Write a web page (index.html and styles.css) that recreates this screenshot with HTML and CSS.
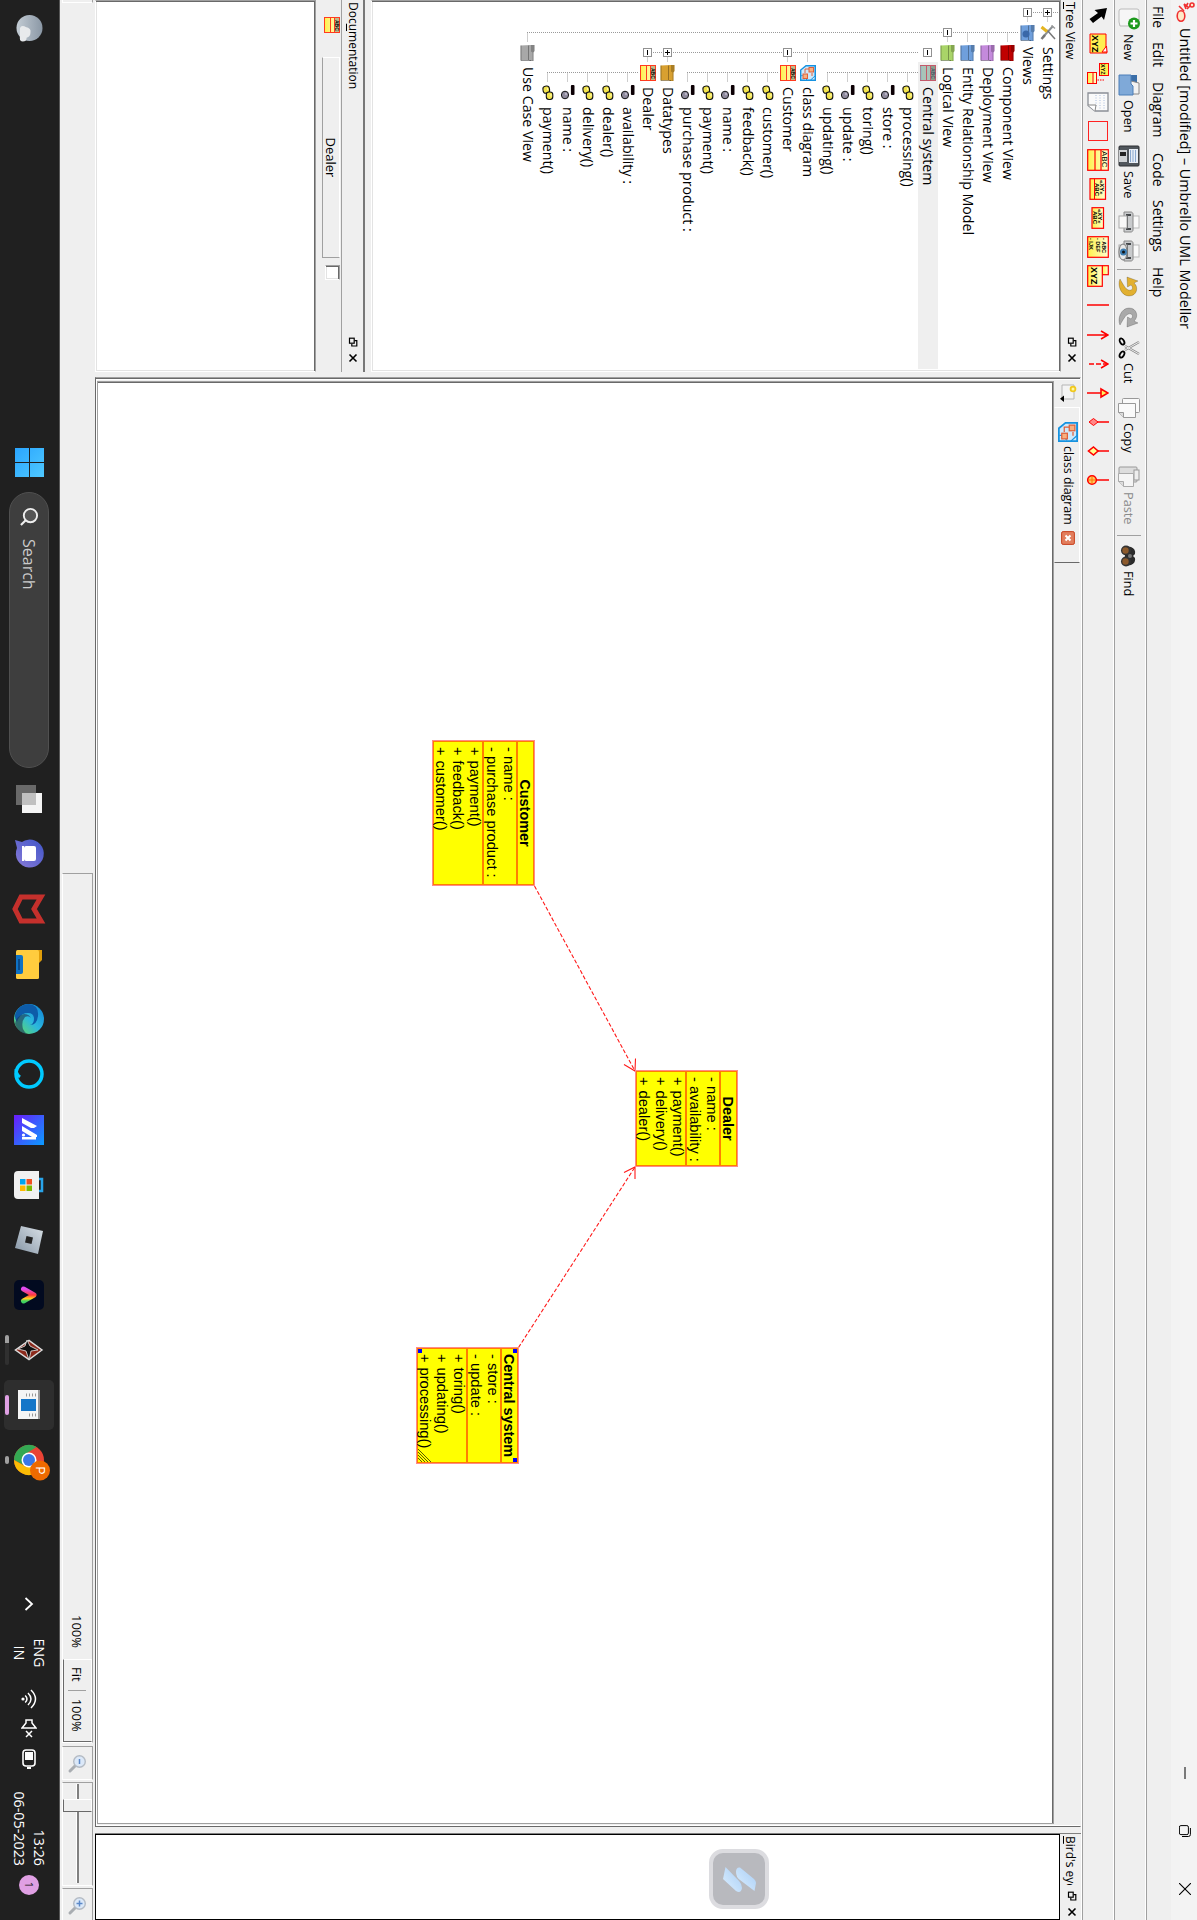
FILE: index.html
```html
<!DOCTYPE html>
<html lang="en">
<head>
<meta charset="utf-8">
<title>Umbrello UML Modeller</title>
<link rel="stylesheet" href="styles.css">
</head>
<body>
<svg class="defs" aria-hidden="true">
  <defs>
    <linearGradient id="gy" x1="0" y1="0" x2="0" y2="1"><stop offset="0" stop-color="#ffffd0"/><stop offset="1" stop-color="#fff04a"/></linearGradient>
    <linearGradient id="gs" x1="1" y1="0" x2="0" y2="1"><stop offset="0" stop-color="#4fc9ff"/><stop offset="1" stop-color="#2aa5ff"/></linearGradient>
    <linearGradient id="gw" x1="0" y1="0" x2="0" y2="1"><stop offset="0" stop-color="#8a97a5"/><stop offset="1" stop-color="#c3ccd4"/></linearGradient>
    <linearGradient id="gb" x1="0" y1="1" x2="1" y2="0"><stop offset="0" stop-color="#6a1cfb"/><stop offset="1" stop-color="#0a9cff"/></linearGradient>
    <linearGradient id="ge" x1="0" y1="0" x2="1" y2="1"><stop offset="0" stop-color="#0f7fd6"/><stop offset=".5" stop-color="#2bb7dd"/><stop offset="1" stop-color="#6be04e"/></linearGradient>
    <linearGradient id="gr" x1="0" y1="0" x2="1" y2="1"><stop offset="0" stop-color="#d9e0e6"/><stop offset="1" stop-color="#8595a5"/></linearGradient>
    <linearGradient id="gv" x1="0" y1="0" x2="1" y2="0"><stop offset="0" stop-color="#e04bf0"/><stop offset=".5" stop-color="#ff3a3a"/><stop offset=".8" stop-color="#ffd21e"/><stop offset="1" stop-color="#40d060"/></linearGradient>
    <linearGradient id="gc" x1="0" y1="0" x2="1" y2="1"><stop offset="0" stop-color="#3f55c8"/><stop offset="1" stop-color="#8a7bd8"/></linearGradient>
    <linearGradient id="gp" x1="0" y1="0" x2="1" y2="1"><stop offset="0" stop-color="#a8cdf5"/><stop offset="1" stop-color="#dcefff"/></linearGradient>
    <symbol id="folder" viewBox="0 0 16 16"><path d="M0 1.500h6l1.500 1H16v4H0z" fill="currentColor"/><path d="M0 1.500h6l1.500 1H16v4H0z" fill="#000" opacity=".22"/><path d="M0 5h6.500l1-1.500H15.500V15.500H.5z" fill="currentColor"/><path d="M.5 7.500H15M.5 15H15.500V5" stroke="#000" stroke-opacity=".3" fill="none"/></symbol>
    <symbol id="tools" viewBox="0 0 16 16"><path d="M1 3l11 10" stroke="#8d9296" stroke-width="2"/><path d="M14 1L5 9" stroke="#777" stroke-width="1.500"/><path d="M6.500 9L2 14.500" stroke="#e5b520" stroke-width="3"/><path d="M10 11l4 3.500" stroke="#777" stroke-width="2.500"/><path d="M.5 4.500L3.500 1" stroke="#999" stroke-width="1.500"/></symbol>
    <symbol id="class" viewBox="0 0 16 16"><rect x=".5" y=".5" width="15" height="15" fill="url(#gy)" stroke="#ff3b1f"/><rect x="1" y="1" width="14" height="4.500" fill="#bdb98a"/><path d="M.5 5.500h15M.5 9.500h15" stroke="#ff3b1f"/><text x="3" y="5" font-size="5" font-weight="700">ABC</text></symbol>
    <symbol id="classsel" viewBox="0 0 16 16"><rect x=".5" y=".5" width="15" height="15" fill="#a9c4b8" stroke="#c4596a"/><rect x="1" y="1" width="14" height="4.500" fill="#8c9c8c"/><path d="M1 5.500h14M1 9.500h14" stroke="#c4596a"/><path d="M1 15h14" stroke="#86b8c8"/><text x="3" y="5" font-size="5" font-weight="700" fill="#456">ABC</text></symbol>
    <symbol id="diagram" viewBox="0 0 16 16"><path d="M.7.7h14.600v14.600H5L.7 10z" fill="#cfe9fb" stroke="#1692e0" stroke-width="1.400"/><path d="M.7.7h10l4.600 5" fill="none" stroke="#1692e0"/><path d="M15 9.500c-4-.5-4.500 2-4.200 5.500" fill="#fff" stroke="#1692e0"/><path d="M4 5v6h4M8 4h3" stroke="#e0603a" fill="none"/><rect x="2.500" y="2.500" width="4.500" height="4.500" fill="#f7b080" stroke="#e0603a"/><rect x="9" y="8.500" width="4.500" height="4.500" fill="#f7b080" stroke="#e0603a"/></symbol>
    <symbol id="op" viewBox="0 0 16 16"><rect x="1" y="6.500" width="7" height="6.500" rx="2.700" fill="#f2e34b" stroke="#111" stroke-width="1.100" transform="rotate(-8 4.500 9)"/><rect x="7" y="3.200" width="7.500" height="6.500" rx="2.700" fill="#f2e34b" stroke="#111" stroke-width="1.100"/><path d="M3 8.500h2M9 5h2.500" stroke="#fff9a8" stroke-width="1.200"/></symbol>
    <symbol id="attr" viewBox="0 0 16 16"><rect x="0" y="1.500" width="10" height="3.600" rx="1" fill="#0c0005"/><ellipse cx="10" cy="11" rx="3.800" ry="3.600" fill="#8e8a9c" stroke="#111"/><circle cx="9" cy="10" r="1.200" fill="#bab6c6"/></symbol>
    <symbol id="plus" viewBox="0 0 9 9"><rect x=".5" y=".5" width="8" height="8" fill="#fff" stroke="#919191"/><path d="M2 4.500h5M4.500 2v5" stroke="#000"/></symbol>
    <symbol id="minus" viewBox="0 0 9 9"><rect x=".5" y=".5" width="8" height="8" fill="#fff" stroke="#919191"/><path d="M2 4.500h5" stroke="#000"/></symbol>
    <symbol id="float" viewBox="0 0 10 10"><path d="M3.700 3.500V1.200H9v5H6.800" fill="none" stroke="#000" stroke-width="1.200"/><rect x="1.200" y="3.800" width="5" height="4.700" fill="none" stroke="#000" stroke-width="1.200"/></symbol>
    <symbol id="close" viewBox="0 0 10 10"><path d="M1.500 1.500l7 7M8.500 1.500l-7 7" stroke="#000" stroke-width="1.600"/></symbol>
    <symbol id="printer" viewBox="0 0 22 22"><rect x="5" y="1" width="12" height="8" fill="#fafafa" stroke="#bbb"/><path d="M1 9c0-1 1-2 2-2h16c1 0 2 1 2 2v7H1z" fill="#c9cbcd" stroke="#888"/><path d="M3 9h2v5H3zM17 9h2v5h-2zM5 12h12v2H5z" fill="#45484b"/><rect x="5" y="13" width="12" height="8" fill="#f8f8f8" stroke="#aaa"/></symbol>
    <symbol id="arrowc" viewBox="0 0 22 22"><path d="M3 20C9 23 20 19 20 11 20 3 11 1 7 6L5 2 1 13l10-.5-2-3.500c3-3 6-1 5 2.500-1 3-5 5-11 8.500z" fill="currentColor" stroke="#0003"/></symbol>
    <symbol id="lens" viewBox="0 0 20 20"><path d="M11 11l6 6" stroke="#a9adb2" stroke-width="3" stroke-linecap="round"/><circle cx="7.500" cy="7.500" r="5.800" fill="#dbe8f8" stroke="#b4bbc4" stroke-width="1.400"/></symbol>
  </defs>
</svg>
<div class="screen">
  <header class="titlebar">
    <svg class="logo" viewBox="0 0 20 20"><g fill="#ffe9c8" stroke="#f03030" stroke-width="1.600"><path d="M7 8L3 4M9 11L4 16"/><circle cx="3" cy="3" r="2"/><path d="M1 7l5 3M2 11l5-2M5 7l-3 4"/><ellipse cx="14" cy="14" rx="5.200" ry="3.800"/></g></svg>
    <span class="caption">Untitled [modified] – Umbrello UML Modeller</span>
    <div class="winbtns">
      <svg viewBox="0 0 12 12"><path d="M0 6h12" stroke="#000"/></svg>
      <svg viewBox="0 0 12 12"><rect x=".6" y="2.600" width="9" height="9" rx="1.500" fill="none" stroke="#000"/><path d="M3 .6h6.500q2 0 2 2V9" fill="none" stroke="#000"/></svg>
      <svg viewBox="0 0 12 12"><path d="M0 0l12 12M12 0L0 12" stroke="#000" stroke-width="1.100"/></svg>
    </div>
  </header>
  <nav class="menubar"><span>File</span><span>Edit</span><span>Diagram</span><span>Code</span><span>Settings</span><span>Help</span></nav>
  <div class="toolbar main-tools">
    <span class="tool"><svg viewBox="0 0 22 22"><path d="M1 3q0-2 2-2h13q2 0 2 2v17l-4 1H3q-2 0-2-2z" fill="#f6f6f6" stroke="#bbb"/><circle cx="15.500" cy="6" r="6" fill="#1d9a1d"/><path d="M12 6h7M15.500 2.500v7" stroke="#fff" stroke-width="2.200"/></svg>New</span>
    <span class="tool"><svg viewBox="0 0 22 22"><path d="M1 3h8l2 2h8v12H1z" fill="#3a6ea8"/><path d="M9 1h11v12H6z" fill="#f2f2f2" stroke="#888"/><path d="M1 9h9l2-2h9v14H1z" fill="#7fa9d8" stroke="#4d7fb8"/></svg>Open</span>
    <span class="tool"><svg viewBox="0 0 22 22"><rect x="1" y="1" width="20" height="20" rx="1" fill="#50565c" stroke="#2c2f33"/><rect x="4" y="2" width="14" height="9" fill="#e8eef6"/><path d="M5 4.500h12M5 7h12M5 9.500h12" stroke="#8aa9d0"/><rect x="5" y="13" width="12" height="8" fill="#cfd2d5"/><rect x="7" y="14" width="4" height="6" fill="#222"/></svg>Save</span>
    <svg><use href="#printer"/></svg>
    <svg viewBox="0 0 22 22"><use href="#printer"/><ellipse cx="12" cy="17" rx="8" ry="4" fill="#e9e9e9" stroke="#777"/><circle cx="12" cy="16.500" r="3.500" fill="#3c7cb0"/><circle cx="12" cy="16.500" r="1.500" fill="#111"/></svg>
    <i class="sep"></i>
    <svg class="undo"><use href="#arrowc"/></svg>
    <svg class="redo"><use href="#arrowc"/></svg>
    <span class="tool"><svg viewBox="0 0 22 22"><path d="M5 1l8 14M17 1L9 15" stroke="#888" stroke-width="2.500"/><path d="M5 1l8 14M17 1L9 15" stroke="#eee" stroke-width="1"/><ellipse cx="4.500" cy="18" rx="3.300" ry="2" transform="rotate(-30 4.500 18)" fill="none" stroke="#000" stroke-width="1.800"/><ellipse cx="17.500" cy="18" rx="3.300" ry="2" transform="rotate(30 17.500 18)" fill="none" stroke="#000" stroke-width="1.800"/></svg>Cut</span>
    <span class="tool"><svg viewBox="0 0 22 22"><rect x="1.500" y=".5" width="14" height="17" rx="1" fill="#fafafa" stroke="#999"/><path d="M6.500 4.500h14v12l-5 5h-9z" fill="#fafafa" stroke="#999"/><path d="M20.500 16.500h-5v5" fill="#ddd" stroke="#999"/></svg>Copy</span>
    <span class="tool off"><svg viewBox="0 0 22 22"><rect x="1" y="3" width="15" height="18" rx="1" fill="#ddd" stroke="#999"/><rect x="4" y="1" width="10" height="5" fill="#eee" stroke="#999"/><path d="M7.500 6.500h13v10l-5 5h-8z" fill="#f5f5f5" stroke="#aaa"/><path d="M20.500 16.500h-5v5" fill="#ddd" stroke="#aaa"/></svg>Paste</span>
    <i class="sep"></i>
    <span class="tool"><svg viewBox="0 0 22 22"><path d="M2 9q2-5 7-4l2 2 2-2q5-1 7 4l1 6H1z" fill="#2b2b2b"/><circle cx="5.500" cy="14" r="5" fill="#333"/><circle cx="16.500" cy="14" r="5" fill="#333"/><circle cx="5.500" cy="14.500" r="3.200" fill="#8c5a2c"/><circle cx="16.500" cy="14.500" r="3.200" fill="#8c5a2c"/><circle cx="11" cy="10" r="2" fill="#777"/></svg>Find</span>
  </div>
  <div class="toolbar draw-tools">
    <svg viewBox="0 0 22 22"><path d="M4 2l12 3-3.500 2.500L19 16l-4 3.500-6-8.500-3 3.500z" fill="#000"/></svg>
    <svg viewBox="0 0 22 22"><path d="M1 3h13l6-1v17H1z" fill="#ffee50" stroke="#f00"/><path d="M13 2.500l6 4.500V2z" fill="#fff" stroke="#f00"/><text x="2" y="17" font-size="9" font-weight="700">XYZ</text></svg>
    <svg viewBox="0 0 22 22"><rect x="1.500" y=".5" width="12" height="9" fill="#ffee50" stroke="#f00"/><path d="M18 5v8" stroke="#f00" stroke-dasharray="1.500 1"/><rect x="10.500" y="12.500" width="11" height="9" fill="url(#gy)" stroke="#f00"/><path d="M10.500 16h11" stroke="#f00"/><text x="2" y="8" font-size="5.500" font-weight="700">XYZ</text></svg>
    <svg viewBox="0 0 22 22"><path d="M2 1h18v13l-5.500 7H2z" fill="#fafafa" stroke="#8b8f96" stroke-width="1.300"/><path d="M4 5h14M4 9h14M4 13h12" stroke="#a9bddd" stroke-dasharray="1 1.500"/><path d="M20 14l-6-1v8" fill="#fff" stroke="#888"/></svg>
    <svg viewBox="0 0 22 22"><rect x="1.500" y="1.500" width="19" height="19" fill="none" stroke="#f22"/></svg>
    <svg viewBox="0 0 22 22"><rect x=".7" y=".7" width="20.600" height="20.600" fill="url(#gy)" stroke="#f00" stroke-width="1.200"/><path d="M1 8h20M1 14h20" stroke="#f00" stroke-width="1.200"/><text x="2" y="7.500" font-size="8">ABC</text></svg>
    <svg viewBox="0 0 22 22"><rect x=".7" y="3.500" width="20.600" height="15.500" fill="url(#gy)" stroke="#f00" stroke-width="1.200"/><path d="M1 14.500h20" stroke="#f00"/><text x="2" y="9" font-size="6" font-weight="700">«XY»</text><text x="5" y="14" font-size="6" font-weight="700">ABC</text></svg>
    <svg viewBox="0 0 22 22"><rect x=".7" y="5.500" width="20.600" height="11.500" fill="url(#gy)" stroke="#f00" stroke-width="1.200"/><text x="2" y="11" font-size="6" font-weight="700">«XY»</text><text x="4" y="16.500" font-size="6" font-weight="700">ABC</text></svg>
    <svg viewBox="0 0 22 22"><rect x=".7" y=".7" width="20.600" height="20.600" fill="url(#gy)" stroke="#f00" stroke-width="1.200"/><g font-size="5.500" font-weight="700"><text x="2" y="7">- ABC</text><text x="2" y="13.500">- DEF</text><text x="2" y="20">- IJK</text></g></svg>
    <svg viewBox="0 0 22 22"><rect x=".7" y=".7" width="9" height="6" fill="url(#gy)" stroke="#f00" stroke-width="1.200"/><rect x=".7" y="6.700" width="20.600" height="14.600" fill="url(#gy)" stroke="#f00" stroke-width="1.200"/><text x="2" y="18" font-size="9" font-weight="700">XYZ</text></svg>
    <svg viewBox="0 0 22 22" class="rel"><path d="M11 0v22"/></svg>
    <svg viewBox="0 0 22 22" class="rel"><path d="M11 1v21M7 8l4-7 4 7"/></svg>
    <svg viewBox="0 0 22 22" class="rel"><path d="M11 1v21" stroke-dasharray="5 2"/><path d="M7 8l4-7 4 7"/></svg>
    <svg viewBox="0 0 22 22" class="rel"><path d="M11 8v14"/><path d="M7 8l4-7 4 7z" fill="#ffef60"/></svg>
    <svg viewBox="0 0 22 22" class="rel"><path d="M11 0v12"/><path d="M7.500 15.500l3.500-4.500 3.500 4.500-3.500 4.500z" fill="#f88" stroke-width="1"/></svg>
    <svg viewBox="0 0 22 22" class="rel"><path d="M11 0v11"/><path d="M7 15.500l4-4.500 4 4.500-4 5z" fill="#ffff90"/></svg>
    <svg viewBox="0 0 22 22" class="rel"><path d="M11 0v12"/><circle cx="11" cy="17" r="4.300" fill="#ffc860"/><path d="M7 17h8M11 13v8" stroke="#f70" stroke-width="1"/></svg>
  </div>
  <main class="work">
    <aside class="left">
      <section class="dock tree-dock">
        <div class="docktitle"><span><u>T</u>ree View</span><svg><use href="#float"/></svg><svg><use href="#close"/></svg></div>
        <div class="sunken tree">
          <svg class="guides" viewBox="0 0 368 685" width="368" height="685">
            <path d="M10.500 1V31M10.500 11.500h9M10.500 31.500h9M30.500 41V532M30.500 51.500h10M30.500 71.500h10M30.500 91.500h10M30.500 111.500h10M30.500 531.500h10M50.500 121V412M50.500 131.500h10M50.500 251.500h10M50.500 271.500h10M50.500 391.500h10M50.500 411.500h10M70.500 141V232M70.500 151.500h10M70.500 171.500h10M70.500 191.500h10M70.500 211.500h10M70.500 231.500h10M70.500 281V372M70.500 291.500h10M70.500 311.500h10M70.500 331.500h10M70.500 351.500h10M70.500 371.500h10M70.500 421V512M70.500 431.500h10M70.500 451.500h10M70.500 471.500h10M70.500 491.500h10M70.500 511.500h10" stroke="#9a9a9a" stroke-dasharray="1 1" fill="none"/>
          </svg>
          <div class="row l0"><svg class="box"><use href="#plus"/></svg><svg><use href="#tools"/></svg>Settings</div>
          <div class="row l0"><svg class="box"><use href="#minus"/></svg><svg class="blue"><use href="#folder"/><circle cx="9" cy="10" r="3.500" fill="#3a68a8"/></svg>Views</div>
          <div class="row l1"><i class="box"></i><svg class="red"><use href="#folder"/></svg>Component View</div>
          <div class="row l1"><i class="box"></i><svg class="purple"><use href="#folder"/></svg>Deployment View</div>
          <div class="row l1"><i class="box"></i><svg class="blue"><use href="#folder"/></svg>Entity Relationship Model</div>
          <div class="row l1"><svg class="box"><use href="#minus"/></svg><svg class="green"><use href="#folder"/></svg>Logical View</div>
          <div class="row l2 sel"><svg class="box"><use href="#minus"/></svg><svg><use href="#classsel"/></svg>Central system</div>
          <div class="row l3"><i class="box"></i><svg><use href="#op"/></svg>processing()</div>
          <div class="row l3"><i class="box"></i><svg><use href="#attr"/></svg>store :</div>
          <div class="row l3"><i class="box"></i><svg><use href="#op"/></svg>toring()</div>
          <div class="row l3"><i class="box"></i><svg><use href="#attr"/></svg>update :</div>
          <div class="row l3"><i class="box"></i><svg><use href="#op"/></svg>updating()</div>
          <div class="row l2"><i class="box"></i><svg><use href="#diagram"/></svg>class diagram</div>
          <div class="row l2"><svg class="box"><use href="#minus"/></svg><svg><use href="#class"/></svg>Customer</div>
          <div class="row l3"><i class="box"></i><svg><use href="#op"/></svg>customer()</div>
          <div class="row l3"><i class="box"></i><svg><use href="#op"/></svg>feedback()</div>
          <div class="row l3"><i class="box"></i><svg><use href="#attr"/></svg>name :</div>
          <div class="row l3"><i class="box"></i><svg><use href="#op"/></svg>payment()</div>
          <div class="row l3"><i class="box"></i><svg><use href="#attr"/></svg>purchase product :</div>
          <div class="row l2"><svg class="box"><use href="#plus"/></svg><svg class="gold"><use href="#folder"/></svg>Datatypes</div>
          <div class="row l2"><svg class="box"><use href="#minus"/></svg><svg><use href="#class"/></svg>Dealer</div>
          <div class="row l3"><i class="box"></i><svg><use href="#attr"/></svg>availability :</div>
          <div class="row l3"><i class="box"></i><svg><use href="#op"/></svg>dealer()</div>
          <div class="row l3"><i class="box"></i><svg><use href="#op"/></svg>delivery()</div>
          <div class="row l3"><i class="box"></i><svg><use href="#attr"/></svg>name :</div>
          <div class="row l3"><i class="box"></i><svg><use href="#op"/></svg>payment()</div>
          <div class="row l1"><i class="box"></i><svg class="gray"><use href="#folder"/></svg>Use Case View</div>
        </div>
      </section>
      <section class="dock doc-dock">
        <div class="docktitle"><span>Doc<u>u</u>mentation</span><svg><use href="#float"/></svg><svg><use href="#close"/></svg></div>
        <div class="docrow"><svg><use href="#class"/></svg><span class="docname">Dealer</span><i class="check"></i></div>
        <div class="sunken doctext"></div>
      </section>
    </aside>
    <section class="center">
      <div class="tabs">
        <span class="newtab"><svg viewBox="0 0 18 18" width="18" height="18"><path d="M1 3h14v12H1z" fill="#f4f4f4" stroke="#b5b5b5"/><circle cx="5" cy="4" r="3.300" fill="#f0c81e"/><circle cx="5" cy="4" r="1.500" fill="#fff6a0"/><path d="M11.500 13h6.500l-3.200 4z" fill="#000"/></svg></span>
        <span class="tab"><svg class="tabicon"><use href="#diagram"/></svg>class diagram<svg class="tabclose" viewBox="0 0 14 14"><rect x=".6" y=".6" width="12.800" height="12.800" rx="1.500" fill="#e27d5c" stroke="#c8401e"/><path d="M4.500 4.500l5 5M9.500 4.500l-5 5" stroke="#fff" stroke-width="2"/></svg></span>
      </div>
      <div class="canvas">
        <svg class="links" viewBox="384 146 1438 951" width="1438" height="951">
          <g fill="none" stroke="#ff1a1a" stroke-width="1.100"><path d="M886 662.500L1071 562M1347.500 678.500L1167 562" stroke-dasharray="4 2"/><path d="M1058.500 561.500L1071 562L1064.500 573M1179 562L1167 562L1172.500 573"/></g>
        </svg>
        <div class="uml customer"><h4>Customer</h4><p>- name :<br>- purchase product :</p><p>+ payment()<br>+ feedback()<br>+ customer()</p></div>
        <div class="uml dealer"><h4>Dealer</h4><p>- name :<br>- availability :</p><p>+ payment()<br>+ delivery()<br>+ dealer()</p></div>
        <div class="uml central"><h4>Central system</h4><p>- store :<br>- update :</p><p>+ toring()<br>+ updating()<br>+ processing()</p><i class="h tl"></i><i class="h tr"></i><i class="h bl"></i><svg class="grip" viewBox="0 0 13 13"><path d="M0 13L13 0M3 13L13 3M6 13L13 6M9 13L13 9" stroke="#5b5b00"/></svg></div>
      </div>
    </section>
    <aside class="dock right">
      <div class="docktitle"><span><u>B</u>ird's eye</span><svg><use href="#float"/></svg><svg><use href="#close"/></svg></div>
      <div class="bird"><svg class="float-btn" viewBox="0 0 60 60" width="60" height="60"><rect width="60" height="60" rx="14" fill="#dcdce0"/><rect x="4" y="4" width="52" height="52" rx="10" fill="#b8b9be"/><path d="M18.500 29L30 15q2-2 4-2l8 1.500L31 29q-3 4-8 4-5 0-4.500-4z" fill="url(#gp)"/><path d="M18 43.500L32 30q3-3 7-3 6 1 3 6L30 46z" fill="url(#gp)"/></svg></div>
    </aside>
  </main>
  <footer class="status">
    <i class="cell c0"></i>
    <div class="cell c1"><span class="pct">100%</span><span class="zoombtns"><b>Fit</b><i></i><b>100%</b></span></div>
    <div class="cell c2"><svg viewBox="0 0 20 20"><use href="#lens"/><path d="M5 7.500h5" stroke="#5b88c8" stroke-width="1.500"/></svg></div>
    <div class="cell c3"><i class="groove"></i><i class="knob"></i><i class="groove long"></i></div>
    <div class="cell c4"><svg viewBox="0 0 20 20"><use href="#lens"/><path d="M4.500 7.500h6M7.500 4.500v6" stroke="#5b88c8" stroke-width="1.500"/></svg></div>
  </footer>
  <footer class="taskbar">
    <svg class="weather" viewBox="0 0 28 28"><circle cx="14" cy="14" r="13.500" fill="url(#gw)"/><path d="M13 18q1-6 6-5 4 0 5 4 4 0 4 4 0 3-3 3h-9q-4 0-4-3 0-2 1-3z" fill="#e8eaec"/></svg>
    <svg class="start" viewBox="0 0 29 29"><path d="M0 0h14v14H0zM15 0h14v14H15zM0 15h14v14H0zM15 15h14v14H15z" fill="url(#gs)"/></svg>
    <div class="search"><svg viewBox="0 0 20 20"><circle cx="9" cy="9" r="7" fill="#555" stroke="#eee" stroke-width="2"/><path d="M14 14l5 5" stroke="#eee" stroke-width="2.200"/></svg>Search</div>
    <div class="apps">
      <span><svg viewBox="0 0 30 30"><rect x="9" y="2" width="20" height="20" fill="#f4f4f4"/><rect x="1" y="8" width="20" height="20" fill="#777" opacity=".85"/><rect x="9" y="8" width="12" height="14" fill="#c0c0c0"/></svg></span>
      <span><svg viewBox="0 0 30 30"><path d="M1 29l2-7A14 14 0 1 1 9 27z" fill="url(#gc)"/><rect x="7" y="8" width="15" height="12" rx="2" fill="#fff"/><path d="M7 21h15" stroke="#fff" stroke-width="2"/></svg></span>
      <span><svg viewBox="0 0 30 30"><path d="M3 3l12 7 12-7v20l-12 6-12-6z" fill="none" stroke="#c5302c" stroke-width="5"/></svg></span>
      <span><svg viewBox="0 0 30 30"><path d="M1 2h10l3 3v4H1z" fill="#e09e0a"/><rect x="1" y="5" width="29" height="23" rx="1.500" fill="#ffcc3e"/><path d="M6 28v-5q0-2 2-2h15q2 0 2 2v5z" fill="#0f72c4"/><path d="M10 25h11" stroke="#0a4a88" stroke-width="2"/></svg></span>
      <span><svg viewBox="0 0 30 30"><circle cx="15" cy="15" r="15" fill="url(#ge)"/><path d="M0 15Q1 5 12 6q9 1 9 8-1-4-6-4-6 0-6 6 0 8 9 11-7 5-14-2-4-4-4-10z" fill="#0d5ba8"/><path d="M14 13q-3 2-1 6 5 4 12 2 4-2 5-4-1 9-10 12-8-1-10-9 0-5 4-7z" fill="#1c3a5c" opacity=".65"/></svg></span>
      <span><svg viewBox="0 0 30 30"><circle cx="15" cy="15" r="13" fill="none" stroke="#00caff" stroke-width="3.500"/><path d="M10 28q5 0 8-4" stroke="#00caff" stroke-width="3" fill="none"/></svg></span>
      <span><svg viewBox="0 0 30 30"><rect width="30" height="30" fill="url(#gb)"/><path d="M3 22L11 7l2 3v3l-5 9zM11 22L20 7h2v5l-6 10zM22 22V8h2.500v14z" fill="#fff"/><circle cx="20" cy="20.500" r="1.600" fill="#fff"/></svg></span>
      <span><svg viewBox="0 0 30 30"><path d="M9 6V2h12v4" fill="none" stroke="#28a4ea" stroke-width="2.500"/><path d="M1 5h28v21q0 4-4 4H5q-4 0-4-4z" fill="#f1f1f1"/><path d="M9 12h5.500v5.500H9z" fill="#f25022"/><path d="M15.500 12H21v5.500h-5.500z" fill="#7fba00"/><path d="M9 18.500h5.500V24H9z" fill="#00a4ef"/><path d="M15.500 18.500H21V24h-5.500z" fill="#ffb900"/></svg></span>
      <span><svg viewBox="0 0 30 30"><path d="M6 1l23 5-6 23-22-6z" fill="url(#gr)"/><path d="M12.500 11l6.500 1.500-1.500 6.500-6.500-1.500z" fill="#222"/></svg></span>
      <span><svg viewBox="0 0 30 30"><rect width="30" height="30" rx="5" fill="#020a20"/><path d="M9 20.500l6-10.500 6 10.500" fill="none" stroke="url(#gv)" stroke-width="5" stroke-linejoin="round" stroke-linecap="round"/></svg></span>
      <span class="run wide"><svg viewBox="0 0 30 30"><path d="M15 2l9.500 13L15 28.500 5.500 15z" fill="#8c2a1c" stroke="#ddd" stroke-width="1.500"/><path d="M5 17l6-3 4-8 1 7 9 2-9 3-2 8-3-7z" fill="#111" stroke="#e6e6e6" stroke-width=".8"/></svg></span>
      <span class="act"><svg viewBox="0 0 30 30"><rect x="0" y="5" width="29" height="21" fill="#f5f5f5"/><path d="M0 5h29" stroke="#999" stroke-width="2"/><rect x="9" y="8" width="12" height="15" fill="#1576c8"/><path d="M5 8v12M25 8v7" stroke="#999" stroke-width="3" stroke-dasharray="1 2"/></svg></span>
      <span class="run"><svg viewBox="0 0 30 30"><circle cx="15" cy="15" r="15" fill="#ea4335"/><path d="M2 7.500A15 15 0 0 0 15 30l6-11.500-12 0z" fill="#34a853"/><path d="M15 30A15 15 0 0 0 28 7.500H15l6.500 11z" fill="#fbbc05"/><circle cx="15" cy="15" r="7.500" fill="#fff"/><circle cx="15" cy="15" r="6" fill="#3b78e7"/><circle cx="25.500" cy="4" r="10" fill="#ee6a00"/><text x="21.500" y="8.500" font-size="12" fill="#fff">P</text></svg></span>
    </div>
    <div class="tray">
      <svg class="chev" viewBox="0 0 14 14"><path d="M1 10.500l6-6.500 6 6.500" fill="none" stroke="#fff" stroke-width="1.800"/></svg>
      <span class="lang">ENG<br>IN</span>
      <svg class="wifi" viewBox="0 0 20 16"><g fill="none" stroke="#fff" stroke-width="1.500"><path d="M1 6q9-9 18 0M4 9q6-6 12 0M6.500 11.800q3.500-3.500 7 0"/></g><circle cx="10" cy="14" r="1.600" fill="#fff"/></svg>
      <svg class="spk" viewBox="0 0 20 16"><path d="M1 5h3l5-4v14l-5-4H1zM12 5l6 6M18 5l-6 6" fill="none" stroke="#fff" stroke-width="1.500"/></svg>
      <svg class="bat" viewBox="0 0 20 14"><rect x="1" y="1" width="16" height="12" rx="3" fill="none" stroke="#fff" stroke-width="1.600"/><rect x="3" y="3" width="8" height="8" fill="#fff"/><path d="M19 5v4" stroke="#fff" stroke-width="2"/></svg>
      <span class="clock">13:26<br>06-05-2023</span>
      <span class="badge">1</span>
    </div>
  </footer>
</div>
</body>
</html>
```
FILE: styles.css
```css
* { box-sizing: border-box; }
html, body { margin: 0; width: 1197px; height: 1920px; overflow: hidden; background: #efefef; }
.defs { position: absolute; width: 0; height: 0; }
svg { display: block; flex: none; }
svg text { font-family: "Liberation Sans", Arial, sans-serif; }

/* The desktop is laid out in landscape and turned a quarter clockwise. */
.screen {
  width: 1920px; height: 1197px;
  transform-origin: 0 0;
  transform: translateX(1197px) rotate(90deg);
  display: flex; flex-direction: column;
  overflow: hidden;
  background: #efefef; color: #000;
  font: 14px/20px "Open Sans", "Noto Sans", sans-serif;
  white-space: nowrap;
}

.titlebar { height: 26px; background: #f3f3f3; display: flex; align-items: center; padding: 0 0 3px 2px; }
.logo { width: 20px; height: 20px; }
.caption { margin-left: 6px; flex: 1; font-size: 14.350px; }
.winbtns { display: flex; gap: 46px; padding-right: 25px; }
.winbtns svg { width: 12px; height: 12px; }

.menubar {
  height: 26px; border-bottom: 1px solid #fff; box-shadow: inset 0 -1px #a0a0a0;
  display: grid; grid-template-columns: 36px 40px 71px 47px 67px 60px;
  padding-left: 6px; line-height: 25px;
}

.toolbar { height: 32px; border-bottom: 1px solid #fff; box-shadow: inset 0 -1px #a0a0a0; display: grid; align-items: center; align-content: center; font-size: 12.700px; }
.toolbar svg { width: 22px; height: 22px; }
.main-tools { grid-template-columns: 66px 71px 66px 29px 29px 7px 30px 31px 60px 69px 69px 10px 60px; padding-left: 8px; }
.tool { display: flex; align-items: center; gap: 4px; }
.off { color: #8a8a8a; }
.sep { width: 1px; height: 24px; background: #a0a0a0; }
.undo { color: #e2b030; }
.redo { color: #a9a9a9; transform: scaleX(-1); }
.draw-tools { grid-template-columns: repeat(17, 22px); column-gap: 7.060px; padding: 0 0 1px 4px; }
.rel { fill: none; stroke: #f00; stroke-width: 1.600; }

.work { height: 986px; display: flex; }
.left { width: 377px; padding-right: 5px; display: flex; flex-direction: column; gap: 6px; }
.dock { display: flex; flex-direction: column; }
.docktitle { height: 20px; display: flex; align-items: center; padding: 0 9px 0 2px; font-size: 12.700px; }
.docktitle span { flex: 1; overflow: hidden; }
.docktitle svg { width: 10px; height: 10px; margin: 0 0 3px 6px; }
u { text-underline-offset: 2px; }
.sunken { background: #fff; border: 1px solid; border-color: #a0a0a0 #fff #fff #a0a0a0; box-shadow: inset 1px 1px #696969, inset -1px -1px #e3e3e3; }

.tree-dock { height: 710px; }
.tree { flex: 1; padding: 2px 2px 0 1px; position: relative; }
.guides { position: absolute; left: 1px; top: 1px; }
.row { height: 20px; display: flex; align-items: center; position: relative; font-size: 14.200px; font-kerning: none; }
.row svg { width: 16px; height: 16px; margin-right: 6px; }
.row .box { width: 9px; height: 9px; margin-right: 8px; }
.l0 { margin-left: 6px; }
.l1 { margin-left: 26px; }
.l2 { margin-left: 46px; }
.l3 { margin-left: 66px; }
.sel { background: linear-gradient(90deg, #fff 14px, #efefef 14px); }
.blue { color: #6f9fdc; } .red { color: #c00000; } .purple { color: #c48adc; }
.green { color: #a9d468; } .gold { color: #d8a030; } .gray { color: #a8a8a8; }

.doc-dock { height: 270px; border-top: 2px solid #777; }
.doc-dock .docktitle { height: 21px; padding-bottom: 2px; font-size: 12px; }
.doc-dock .docktitle svg { margin-bottom: 0; }
.docrow { height: 26px; border-top: 1px solid #a0a0a0; display: flex; align-items: flex-start; padding: 1px 0 0 17px; }
.docrow svg { width: 16px; height: 16px; }
.docname { width: 201px; height: 18px; margin-left: 24px; text-align: center; font-size: 13px; line-height: 16px; border: 1px solid; border-color: #fff #a0a0a0 #a0a0a0 #fff; }
.check { width: 15px; height: 15px; margin-left: 7px; background: #fff; border: 1px solid; border-color: #a0a0a0 #fff #fff #a0a0a0; box-shadow: inset 1px 1px #696969, inset -1px -1px #e3e3e3; }
.doctext { flex: 1; }

.center { width: 1450px; border: 1px solid; border-color: transparent #696969 #696969 #a0a0a0; box-shadow: inset 1px 0 #696969, inset 2px 0 #fff, inset -1px -1px #fff; padding: 0 2px 1px 3px; }
.tabs { height: 26px; display: flex; font-size: 12.400px; }
.newtab { width: 26px; padding: 3px 0 0 3px; }
.tab { width: 156px; height: 26px; display: flex; align-items: center; padding: 0 0 2px 14px; border: 1px solid; border-color: #fff #696969 transparent #fff; }
.tabicon { width: 20px; height: 20px; margin-right: 4px; }
.tabclose { width: 14px; height: 14px; margin-left: 6px; }
.canvas { height: 957px; background: #fff; position: relative; border: 1px solid; border-color: #696969 #e3e3e3 #e3e3e3 #696969; outline: 1px solid #a0a0a0; outline-offset: -1px; box-shadow: inset 1px 1px #696969; }
.links { position: absolute; left: 2px; top: 2px; }
.uml { position: absolute; height: 101px; background: #ff0; border: 1px solid #ff7f00; outline: 1px solid #ff8a8a; font: 14.700px/17px "Liberation Sans", Arial, sans-serif; }
.uml h4 { margin: 0; height: 16px; text-align: center; font-size: 14.400px; line-height: 16px; }
.uml p { margin: 0; padding-left: 5px; box-shadow: 0 -1px #ff7f00, inset 0 1px #ff7f00; }
.uml p:last-of-type { word-spacing: .8px; }
.customer { left: 359px; top: 519px; width: 144px; }
.dealer { left: 689px; top: 316px; width: 95px; }
.central { left: 966px; top: 535px; width: 115px; }
.h { position: absolute; width: 4px; height: 4px; background: #00f; }
.tl { left: 0; top: 0; } .tr { right: 0; top: 0; } .bl { left: 0; bottom: 0; }
.grip { position: absolute; right: 0; bottom: 0; width: 13px; height: 13px; }

.right { width: 87px; margin-left: 6px; border-left: 1px solid #808080; }
.right .docktitle { height: 21px; padding: 0 3px 0 2px; font-size: 12px; }
.bird { flex: 1; background: #fff; border: 1px solid #000; padding: 290px 0 0 14px; }

.status { height: 35px; display: flex; padding-top: 2px; }
.cell { height: 31px; border: 1px solid; border-color: #a0a0a0 #fff #fff #a0a0a0; display: flex; align-items: center; }
.cell svg { width: 20px; height: 20px; margin-left: 7px; }
.c0 { width: 3px; border-left: 0; }
.c1 { width: 870px; margin-left: 870px; justify-content: flex-end; }
.pct { font-size: 13px; margin-right: 11px; }
.zoombtns { width: 83px; height: 29px; display: flex; align-items: center; gap: 8px; padding-left: 7px; border: 1px solid; border-color: #fff #696969 #696969 #fff; font-size: 13px; }
.zoombtns b { font-weight: 400; }
.zoombtns i { width: 1px; height: 18px; background: #a0a0a0; }
.c2 { width: 34px; margin-left: 3px; }
.c3 { width: 104px; margin-left: 2px; }
.c4 { width: 32px; margin-left: 2px; border-right: 0; }
.groove { width: 15px; height: 3px; margin-left: 1px; background: #fff; border-top: 2px solid #808080; }
.long { width: 71px; margin-left: 0; }
.knob { width: 13px; height: 29px; background: #efefef; border: 1px solid; border-color: #fff #696969 #696969 #fff; }

.taskbar { flex: 1; background: #202020; border-top: 1px solid #575757; display: flex; align-items: center; color: #fff; }
.weather { width: 28px; height: 27px; margin-left: 14px; }
.start { width: 29px; height: 29px; margin-left: 406px; }
.search { width: 276px; height: 40px; margin-left: 15px; border-radius: 20px; background: #3e3e3e; border: 1px solid #505050; display: flex; align-items: center; padding-left: 14px; font-size: 16px; color: #ccc; gap: 13px; }
.search svg { width: 19px; height: 19px; }
.apps { display: flex; margin-left: 6px; }
.apps span { width: 50px; height: 50px; margin-right: 5.100px; display: flex; align-items: center; justify-content: center; position: relative; }
.apps svg { width: 30px; height: 30px; overflow: visible; }
.run::after { content: ""; position: absolute; bottom: 1px; width: 8px; height: 4px; border-radius: 2px; background: #a0a0a0; }
.apps .wide::after { width: 30px; background: linear-gradient(90deg, #a0a0a0 8px, #303030 8px); }
.apps .act { background: #2e2e2e; border-radius: 5px; }
.act::after { content: ""; position: absolute; bottom: 1px; width: 20px; height: 4px; border-radius: 2px; background: #e0a0e4; }
.tray { display: flex; align-items: center; flex: 1; justify-content: flex-end; padding-right: 25px; font-size: 14.300px; line-height: 20px; }
.chev { width: 14px; height: 14px; margin-right: 27px; }
.lang { width: 29px; text-align: center; margin-right: 22px; }
.wifi { width: 20px; height: 16px; margin-right: 10px; }
.spk { width: 20px; height: 16px; margin-right: 10px; }
.bat { width: 20px; height: 14px; margin-right: 22px; }
.clock { text-align: right; margin-right: 9px; }
.badge { width: 20px; height: 20px; border-radius: 50%; background: #e0a0e4; color: #111; font-size: 11px; text-align: center; }
```
